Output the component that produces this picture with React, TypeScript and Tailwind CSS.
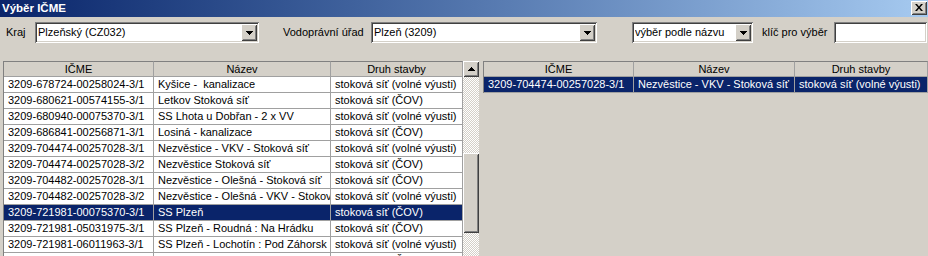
import React from 'react';

type Row = { icme: string; nazev: string; druh: string };

const rows: Row[] = [
  { icme: '3209-678724-00258024-3/1', nazev: 'Kyšice -  kanalizace', druh: 'stoková síť (volné výusti)' },
  { icme: '3209-680621-00574155-3/1', nazev: 'Letkov Stoková síť', druh: 'stoková síť (ČOV)' },
  { icme: '3209-680940-00075370-3/1', nazev: 'SS Lhota u Dobřan - 2 x VV', druh: 'stoková síť (volné výusti)' },
  { icme: '3209-686841-00256871-3/1', nazev: 'Losiná - kanalizace', druh: 'stoková síť (ČOV)' },
  { icme: '3209-704474-00257028-3/1', nazev: 'Nezvěstice - VKV - Stoková síť', druh: 'stoková síť (volné výusti)' },
  { icme: '3209-704474-00257028-3/2', nazev: 'Nezvěstice Stoková síť', druh: 'stoková síť (ČOV)' },
  { icme: '3209-704482-00257028-3/1', nazev: 'Nezvěstice - Olešná - Stoková síť', druh: 'stoková síť (ČOV)' },
  { icme: '3209-704482-00257028-3/2', nazev: 'Nezvěstice - Olešná - VKV - Stokov', druh: 'stoková síť (volné výusti)' },
  { icme: '3209-721981-00075370-3/1', nazev: 'SS Plzeň', druh: 'stoková síť (ČOV)' },
  { icme: '3209-721981-05031975-3/1', nazev: 'SS Plzeň - Roudná : Na Hrádku', druh: 'stoková síť (ČOV)' },
  { icme: '3209-721981-06011963-3/1', nazev: 'SS Plzeň - Lochotín : Pod Záhorsk', druh: 'stoková síť (volné výusti)' },
  { icme: '', nazev: '', druh: 'stoková síť (ČOV)' },
];

const raised =
  'shadow-[inset_1px_1px_0_#ffffff,inset_-1px_-1px_0_#404040,inset_2px_2px_0_#d4d0c8,inset_-2px_-2px_0_#808080]';
const sunken =
  'shadow-[inset_1px_1px_0_#808080,inset_-1px_-1px_0_#ffffff,inset_2px_2px_0_#404040,inset_-2px_-2px_0_#d4d0c8]';

function Arrow({ up = false }: { up?: boolean }) {
  return (
    <svg width="7" height="4" viewBox="0 0 7 4" className="block">
      {up ? <path d="M3 0h1v1h1v1h1v1h1v1H0V3h1V2h1V1h1z" fill="#000" /> : <path d="M0 0h7v1H6v1H5v1H4v1H3V3H2V2H1V1H0z" fill="#000" />}
    </svg>
  );
}

function Combo({ width, value }: { width: string; value: string }) {
  return (
    <div className={`${width} h-[21px] bg-white ${sunken} flex items-center pl-[3px] pr-[2px] shrink-0`}>
      <span className="flex-1 truncate">{value}</span>
      <div className={`w-[16px] h-[17px] bg-[#d4d0c8] ${raised} flex items-center justify-center`}>
        <Arrow />
      </div>
    </div>
  );
}

function Header({ cols }: { cols: string[] }) {
  const labels = ['IČME', 'Název', 'Druh stavby'];
  return (
    <div className="flex h-[16px] border-b border-[#a0a0a0] bg-[#d4d0c8]">
      {labels.map((l, i) => (
        <div
          key={l}
          className={`${cols[i]} shrink-0 text-center leading-[15px] border-r border-[#a0a0a0] border-t border-t-[#808080]`}
        >
          {l}
        </div>
      ))}
    </div>
  );
}

function DataRow({ row, cols, selected }: { row: Row; cols: string[]; selected: boolean }) {
  const vals = [row.icme, row.nazev, row.druh];
  return (
    <div className={`flex h-[16px] border-b border-[#a0a0a0] ${selected ? 'bg-[#0a246a] text-white' : 'bg-white'}`}>
      {vals.map((v, i) => (
        <div
          key={i}
          className={`${cols[i]} shrink-0 overflow-hidden whitespace-pre pl-[4px] leading-[15px] border-r border-[#a0a0a0]`}
        >
          {v}
        </div>
      ))}
    </div>
  );
}

export default function App() {
  const leftCols = ['w-[150px]', 'w-[177px]', 'w-[132px]'];
  const rightCols = ['w-[150px]', 'w-[161px]', 'w-[133px]'];

  return (
    <div
      className="w-[928px] h-[256px] overflow-hidden bg-[#d4d0c8] text-black text-[11px] tracking-[0px]"
      style={{ fontFamily: '"Liberation Sans", Arial, sans-serif' }}
    >
      {/* title bar */}
      <div className="h-[17px] flex items-center justify-between pl-[2px] pr-[1px] bg-gradient-to-r from-[#0a246a] to-[#a6caf0]">
        <span className="text-white font-bold text-[11.5px] tracking-normal leading-none">Výběr IČME</span>
        <div className={`w-[16px] h-[14px] mb-[2px] bg-[#d4d0c8] ${raised} flex items-center justify-center`}>
          <svg width="8" height="7" viewBox="0 0 8 7">
            <path d="M0 0h2l2 2.5L6 0h2L5 3.5 8 7H6L4 4.5 2 7H0l3-3.5z" fill="#000" />
          </svg>
        </div>
      </div>

      {/* filter row */}
      <div className="flex items-center mt-[5px] h-[21px]">
        <div className="w-[35px] pl-[6px] shrink-0">Kraj</div>
        <Combo width="w-[224px]" value="Plzeňský (CZ032)" />
        <div className="w-[112px] pl-[24px] shrink-0">Vodoprávní úřad</div>
        <Combo width="w-[226px]" value="Plzeň (3209)" />
        <div className="w-[35px] shrink-0" />
        <Combo width="w-[121px]" value="výběr podle názvu" />
        <div className="w-[81px] pl-[9px] shrink-0">klíč pro výběr</div>
        <div className={`w-[93px] h-[21px] bg-white ${sunken} shrink-0`} />
      </div>

      {/* tables */}
      <div className="flex mt-[18px] pl-[3px]">
        <div className="border-l border-[#808080]">
          <Header cols={leftCols} />
          {rows.map((r, i) => (
            <DataRow key={i} row={r} cols={leftCols} selected={i === 8} />
          ))}
        </div>

        {/* scrollbar */}
        <div className="w-[16px] h-[220px] flex flex-col bg-[repeating-conic-gradient(#d4d0c8_0_25%,#ffffff_0_50%)] bg-[length:2px_2px]">
          <div className={`h-[16px] bg-[#d4d0c8] ${raised} flex items-center justify-center`}>
            <Arrow up />
          </div>
          <div className="h-[76px]" />
          <div className={`h-[80px] bg-[#d4d0c8] ${raised}`} />
        </div>

        <div className="ml-[4px] self-start border-l border-[#808080]">
          <Header cols={rightCols} />
          <DataRow row={rows[4]} cols={rightCols} selected />
        </div>
      </div>
    </div>
  );
}
